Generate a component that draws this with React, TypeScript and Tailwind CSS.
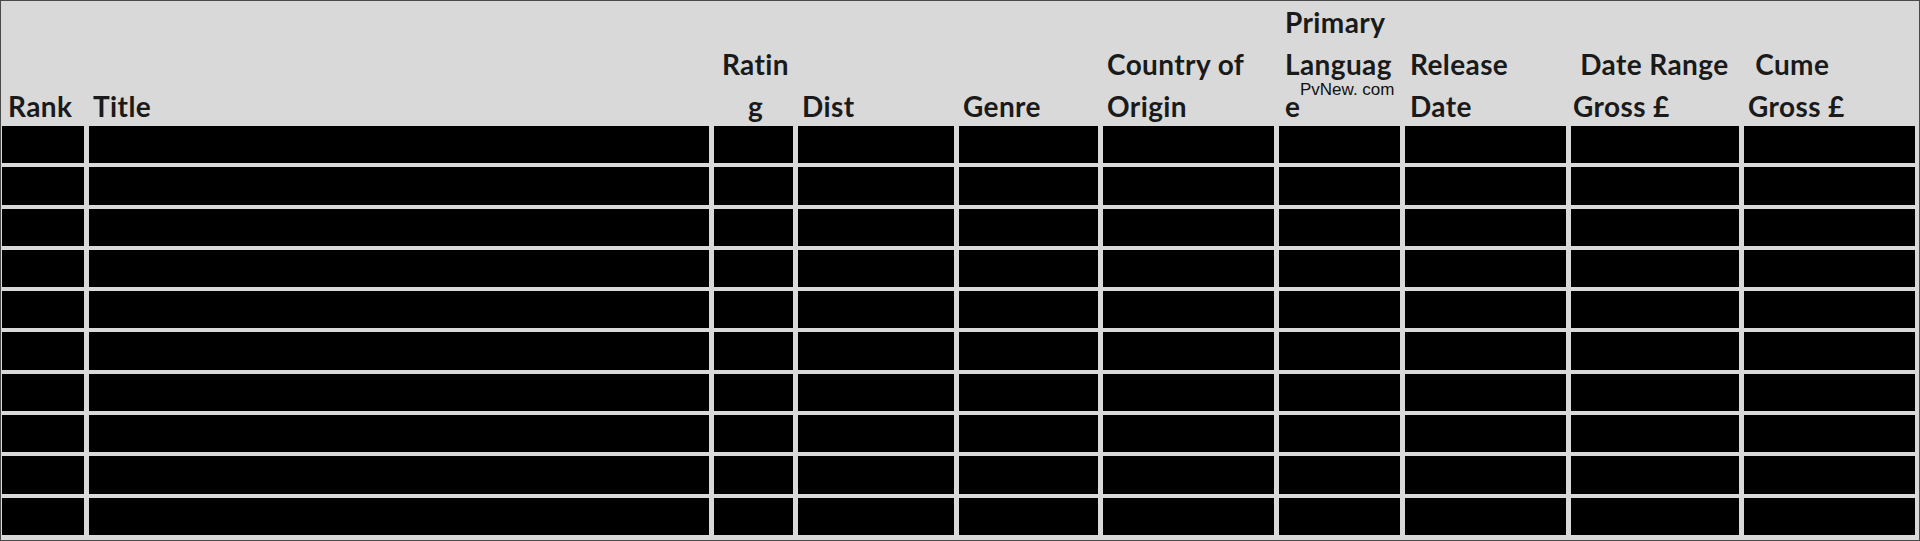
const COLS = "grid-cols-[82px_620px_79px_156px_139px_171px_121px_161px_168px_171px]";

const HEADERS: { lines: string[]; cls?: string }[] = [
  { lines: ["Rank"], cls: "pl-[6px]" },
  { lines: ["Title"], cls: "pl-[4px]" },
  { lines: ["Ratin", "g"], cls: "text-center pl-[4px]" },
  { lines: ["Dist"], cls: "pl-[4px]" },
  { lines: ["Genre"], cls: "pl-[4px]" },
  { lines: ["Country of", "Origin"], cls: "pl-[4px]" },
  { lines: ["Primary", "Languag", "e"], cls: "pl-[6px]" },
  { lines: ["Release", "Date"], cls: "pl-[5px]" },
  { lines: ["\u00a0Date Range", "Gross £"], cls: "pl-[2px]" },
  { lines: ["\u00a0Cume", "Gross £"], cls: "pl-[4px]" },
];

export default function App() {
  return (
    <div className="relative h-[541px] w-[1920px] border border-[#4a4a4a] bg-[#d9d9d9] pl-px pr-[4px] pb-[4px]">
      {/* header row */}
      <div
        className={`grid ${COLS} h-[125px] gap-x-[5px] font-bold text-[28px] leading-[42px] tracking-[0.4px] text-[#1a1a1a]`}
        style={{ fontFamily: "Lato, 'Open Sans', sans-serif" }}
      >
        {HEADERS.map((h, i) => (
          <div key={i} className={`flex flex-col justify-end whitespace-pre ${h.cls ?? ""}`}>
            {h.lines.map((l, j) => (
              <div key={j}>{l}</div>
            ))}
          </div>
        ))}
      </div>

      {/* redacted body */}
      <div className={`grid ${COLS} grid-rows-[repeat(10,1fr)] h-[409px] gap-x-[5px] gap-y-[4px]`}>
        {Array.from({ length: 100 }).map((_, i) => (
          <div key={i} className="bg-black" />
        ))}
      </div>

      {/* watermark */}
      <div
        className="absolute left-[1299px] top-[79px] whitespace-nowrap text-[17px] leading-[20px] text-[#111]"
        style={{ fontFamily: "'Liberation Sans', Arial, sans-serif" }}
      >
        PvNew. com
      </div>
    </div>
  );
}
